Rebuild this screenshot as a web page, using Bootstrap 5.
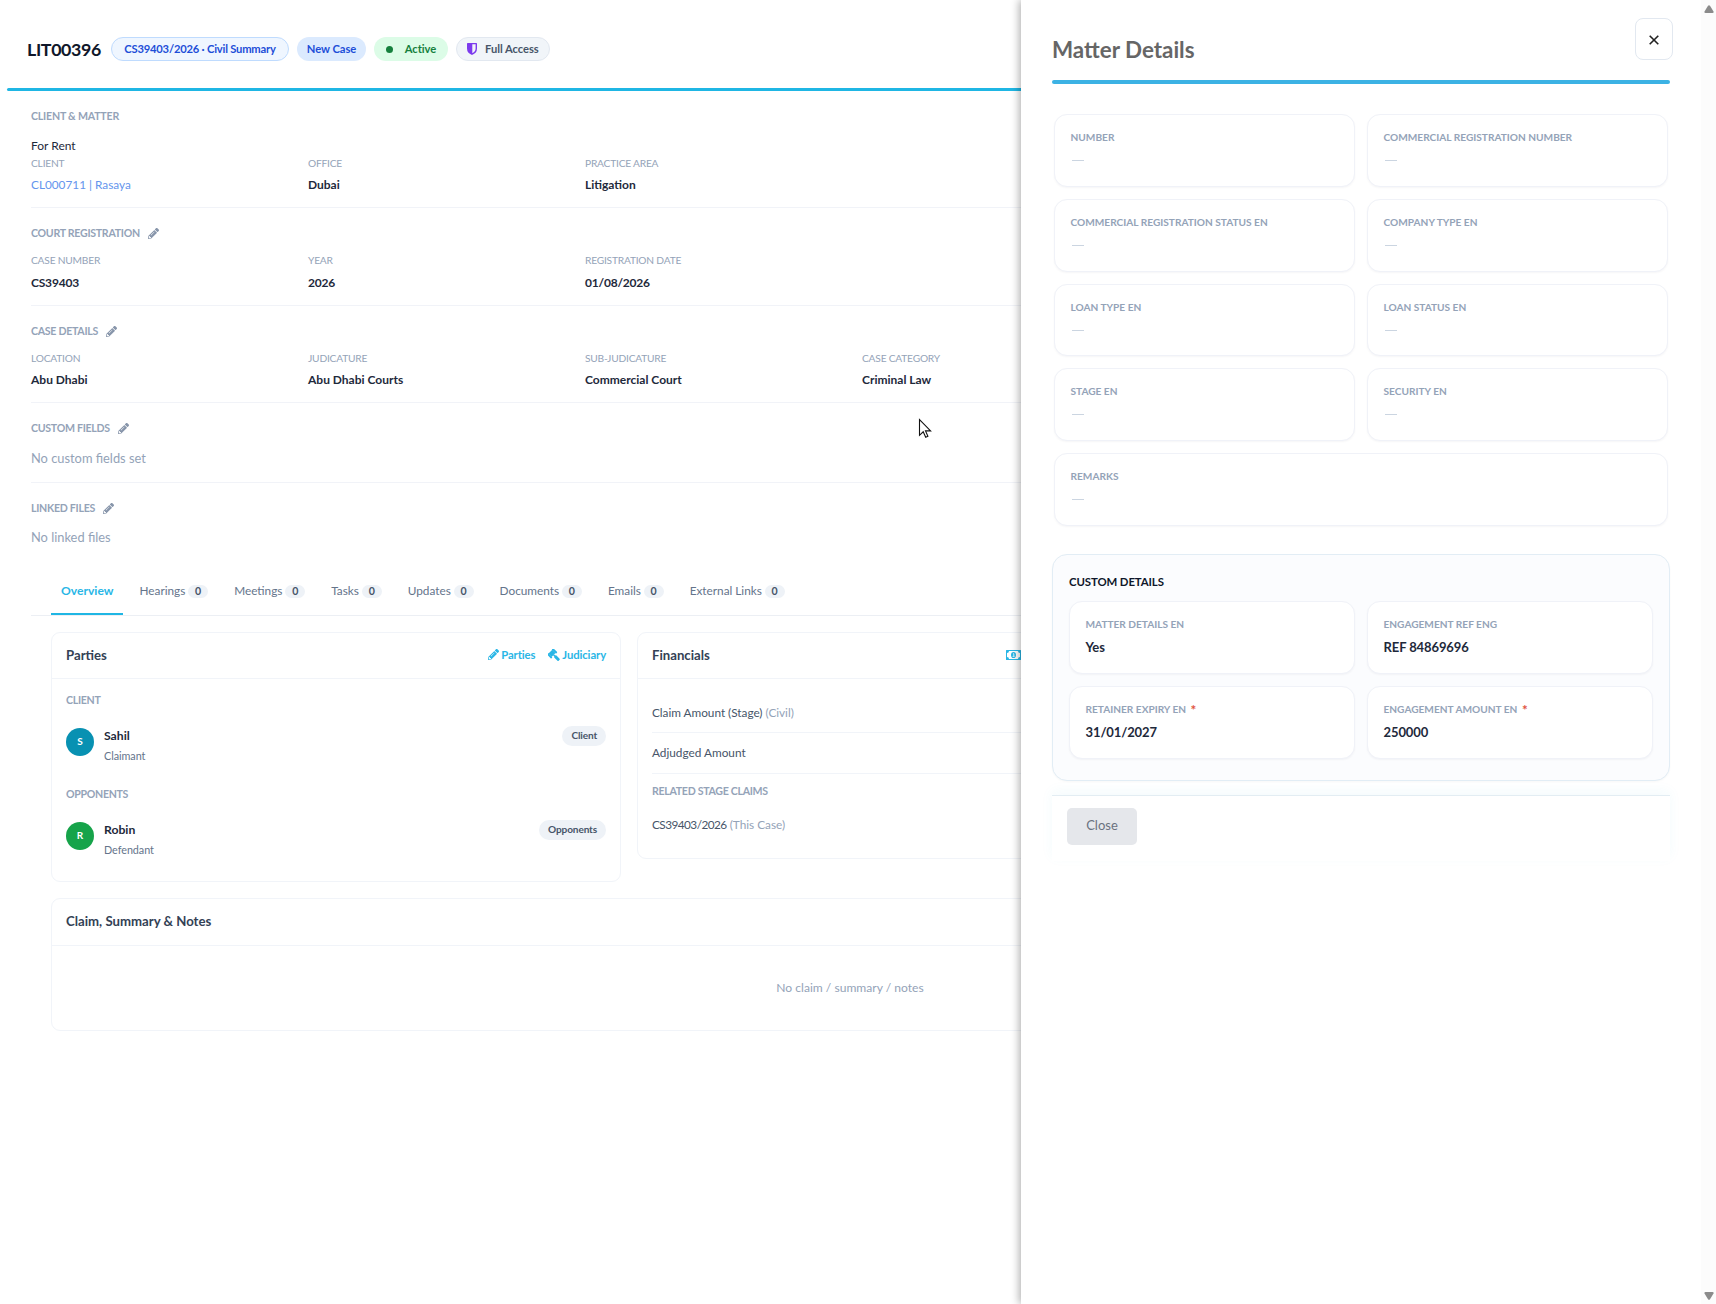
<!DOCTYPE html>
<html lang="en">
<head>
<meta charset="utf-8">
<title>LIT00396</title>
<link rel="stylesheet" href="https://cdn.jsdelivr.net/npm/bootstrap@5.3.0/dist/css/bootstrap.min.css">
<style>
html,body{height:1304px;overflow:hidden}
body{font-family:Lato,"Open Sans",sans-serif;background:#fff;color:#1e293b;font-size:11.8px;line-height:20px}
.shell{width:1716px;height:1304px}
.main-pane{width:1701px}
.case-head{height:88px;padding:10px 0 0 27px;gap:8px}
.case-no{font-size:17.8px;letter-spacing:-.35px;font-weight:700;color:#0f172a;width:76px;white-space:nowrap}
.chip{height:24px;border-radius:12px;padding:0 10px;font-weight:700;font-size:11.2px;letter-spacing:-.05px;border:1px solid transparent;white-space:nowrap}
.chip-ref{background:#eff6ff;border-color:#bfdbfe;color:#1d4ed8;width:178px;letter-spacing:-.2px}
.chip-new{background:#dbeafe;color:#1d4ed8;width:69px}
.chip-on{background:#dcfce7;color:#15803d;width:74px}
.chip-acc{background:#f1f5f9;border-color:#e2e8f0;color:#475569;width:94px}
.dot{width:7px;height:7px;border-radius:50%;background:#15803d;margin-right:12px}
.rule{height:3px;background:#1fb6e4;margin-left:7px;border-radius:2px}
.sect{margin-left:31px;padding-top:16px;border-bottom:1px solid #f1f3f8;padding-bottom:12px}
.sect-text{padding-bottom:14px}
.sect h6,.cap{font-size:10.6px;line-height:19px;font-weight:700;color:#94a3b8;margin:0 0 10px;letter-spacing:-.28px}
.sect .h-plain{letter-spacing:-.2px}
.cap{letter-spacing:-.3px;margin:0}
.sect h6{display:flex;align-items:center}
.sect h6 svg{margin:-1px 0 0 8px;color:#8795aa}
.matter-name{font-size:12px;line-height:19px;margin-bottom:1px}
.fld{width:277px}
.lbl{font-size:10.2px;line-height:15px;color:#94a3b8;margin-bottom:4px;letter-spacing:-.2px}
.lbl-5{margin-bottom:5px}
.val{font-size:12px;font-weight:700;color:#1e293b}
.num{letter-spacing:-.2px}
.lnk{color:#6495ed}
.none{font-size:12.85px;color:#94a3b8}
.none-up{line-height:19px;padding-bottom:1px}
.tabbar{margin:33px 0 0 31px;padding-left:20px;gap:6px;border-bottom:1px solid #eceff4}
.tab{padding:0 10px 12px;border-bottom:2px solid transparent;color:#64748b;display:flex;align-items:center;white-space:nowrap}
.tab.on{color:#29b6e6;border-color:#1fb6e4;font-weight:700;font-size:12.1px}
.cnt{height:13px;line-height:13px;width:20px;border-radius:7px;background:#eef2f7;color:#475569;font-size:10.6px;font-weight:700;text-align:center;margin-left:2.8px}
.panes{margin:16px 52px 0 51px;gap:16px}
.box{border:1px solid #f1f4f9;border-radius:9px}
.box-h{height:46px;padding:0 14px 2px;border-bottom:1px solid #f1f4f9}
.box-parties{width:570px;height:250px}
.box-fin{height:227px}
.box-notes{margin:16px 52px 0 51px;height:133px}
.box-notes .box-h{height:47px;padding-bottom:3px}
.ttl{font-size:13.2px;font-weight:700;color:#334155}
.act{color:#29b6e6;font-weight:700;font-size:11.3px;letter-spacing:-.1px}
.act svg{margin-right:2px}
.act .ico-gavel{margin-left:13px}
.people{padding:12px 14px 0}
.person{margin-top:16px;min-height:40px}
.cap-2{margin-top:19px}
.ava{width:28px;height:28px;border-radius:50%;color:#fff;font-weight:700;font-size:10px;line-height:26px;text-align:center;margin:2px 10px 0 0}
.ava-s{background:#0891b2}
.ava-r{background:#16a34a}
.who{font-size:12.2px;font-weight:700;color:#1e293b}
.as{font-size:10.8px;color:#64748b;letter-spacing:-.05px}
.role{background:#eef2f7;color:#475569;height:20px;line-height:19px;border-radius:10px;padding:0 9px;font-size:10.1px;letter-spacing:-.15px;font-weight:700}
.cash{margin-left:296px}
.fin-body{padding:24px 14px 0}
.fin{border-bottom:1px solid #f1f4f9;color:#475569}
.fin-1{height:30px;letter-spacing:-.02px}
.fin-1,.fin-2{white-space:pre}
.fin-2{height:41px;padding-top:10px}
.fin-cap{margin-top:8px}
.fin-3{margin-top:14px}
.digits{letter-spacing:-.55px}
.mut{color:#94a3b8}
.notes-none{font-size:12.1px;padding-top:32px}
.drawer{position:absolute;left:1021px;top:0;width:695px;height:1304px;background:#fff;box-shadow:-2px 0 8px rgba(0,0,0,.3);padding:0 46px 0 31px}
.x-btn{position:absolute;left:614px;top:18px;width:38px;height:42px;border:1px solid #e2e8f0;border-radius:8px;background:#fff;padding:2px 0 0;line-height:0}
.dw-t{font-size:22.4px;font-weight:700;color:#666;line-height:30px;padding-top:35px;height:80px;margin:0}
.dw-r{height:4px;background:#3cb2e4;border-radius:2px}
.fgrid{display:grid;grid-template-columns:1fr 1fr;gap:12px}
.g1{padding:30px 2px 0}
.fc{height:73px;border:1px solid #f0f2f8;border-radius:13px;padding:14px 15px 0 15.5px;background:#fff;box-shadow:0 1px 2px rgba(15,23,42,.04)}
.g1 .fc{height:72.75px}
.wide{grid-column:span 2}
.fl{font-size:10.15px;letter-spacing:0;font-weight:700;color:#94a3b8;line-height:16px;position:relative}
.fv{font-size:13px;font-weight:700;color:#1e293b;line-height:20px;margin-top:5px;letter-spacing:-.1px}
.dash{width:12px;height:1px;background:#cbd5e1;margin:15px 0 0 1px}
.cbox{margin-top:28px;height:227px;border:1px solid #e2edf5;border-radius:15px;background:#fbfcfe;padding:17px 16px 0;box-shadow:0 1px 2px rgba(15,23,42,.03)}
.cbt{font-size:11.4px;font-weight:700;color:#0f172a;line-height:20px;margin-bottom:9px;letter-spacing:-.1px}
.foot{margin-top:14px;height:66px;border-top:1px solid #e3edf3;padding:12px 15px;box-shadow:0 -4px 12px rgba(40,180,220,.05);background:#fff}
.c-btn{width:70px;height:37px;border:0;border-radius:5px;background:#e5e7eb;color:#6b7280;font-size:13px;padding:0 0 2px}
.sb{position:absolute;right:0;top:0;width:15px;height:1304px;background:#fcfcfc;padding:5px 3px 4px}
.cur{position:absolute;left:918px;top:418px}
.req{color:#e0533d;font-size:13.500px;line-height:10px;margin-left:2px;vertical-align:-2px}
</style>
<script src="https://cdn.jsdelivr.net/npm/bootstrap@5.3.0/dist/js/bootstrap.bundle.min.js"></script>
</head>
<body>
<svg width="0" height="0" class="position-absolute"><defs>
<symbol id="pen" viewBox="0 0 512 512"><path fill="currentColor" fill-rule="evenodd" d="M498 142l-46 46c-5 5-13 5-17 0L324 77c-5-5-5-12 0-17l46-46c19-19 49-19 68 0l60 60c19 19 19 49 0 68zM284 100L22 362 0 484c-3 16 12 30 28 28l122-22 262-262c5-5 5-13 0-17L301 100c-4-5-12-5-17 0zM88 424h48v36l-64 12-32-31 12-65h36zM140 345l-14-14 160-160 14 14z"/></symbol>
<symbol id="gavel" viewBox="0 0 12 12"><g fill="currentColor" transform="rotate(45 4.500 4.500)"><rect x="1.700" y="2" width="4.600" height="5.400"/><rect x=".9" y=".2" width="6.200" height="1.900" rx=".6"/><rect x=".9" y="7.200" width="6.200" height="1.900" rx=".6"/><rect x="6" y="3.900" width="2.600" height="1.400"/><rect x="8" y="3.200" width="6" height="2.900" rx=".8"/></g></symbol>
</defs></svg>
<div class="shell position-relative overflow-hidden">
<main class="main-pane">
 <header class="case-head d-flex align-items-center">
  <span class="case-no">LIT00396</span>
  <span class="chip chip-ref d-flex align-items-center justify-content-center">CS39403/2026 · Civil Summary</span>
  <span class="chip chip-new d-flex align-items-center justify-content-center">New Case</span>
  <span class="chip chip-on d-flex align-items-center justify-content-center"><i class="dot"></i>Active</span>
  <span class="chip chip-acc d-flex align-items-center"><svg class="me-2" width="10" height="12" viewBox="0 0 10 12"><path fill="#7c3aed" fill-rule="evenodd" d="M0 .6Q0 0 .8 0H9.2Q10 0 10 .6V5.500Q10 10 5 12 0 10 0 5.500ZM5.300 1.300V10.300Q8.600 8.500 8.600 5.500V1.300Z"/></svg>Full Access</span>
 </header>
 <div class="rule"></div>
 <section class="sect"><h6 class="h-plain">CLIENT &amp; MATTER</h6><div class="matter-name">For Rent</div>
  <div class="d-flex">
   <div class="fld"><div class="lbl">CLIENT</div><div class="lnk">CL000711 | Rasaya</div></div>
   <div class="fld"><div class="lbl">OFFICE</div><div class="val">Dubai</div></div>
   <div class="fld"><div class="lbl">PRACTICE AREA</div><div class="val">Litigation</div></div>
  </div></section>
 <section class="sect"><h6>COURT REGISTRATION<svg width="11" height="11"><use href="#pen"/></svg></h6>
  <div class="d-flex">
   <div class="fld"><div class="lbl lbl-5">CASE NUMBER</div><div class="val num">CS39403</div></div>
   <div class="fld"><div class="lbl lbl-5">YEAR</div><div class="val num">2026</div></div>
   <div class="fld"><div class="lbl lbl-5">REGISTRATION DATE</div><div class="val num">01/08/2026</div></div>
  </div></section>
 <section class="sect"><h6>CASE DETAILS<svg width="11" height="11"><use href="#pen"/></svg></h6>
  <div class="d-flex">
   <div class="fld"><div class="lbl">LOCATION</div><div class="val">Abu Dhabi</div></div>
   <div class="fld"><div class="lbl">JUDICATURE</div><div class="val">Abu Dhabi Courts</div></div>
   <div class="fld"><div class="lbl">SUB-JUDICATURE</div><div class="val">Commercial Court</div></div>
   <div class="fld"><div class="lbl">CASE CATEGORY</div><div class="val">Criminal Law</div></div>
  </div></section>
 <section class="sect sect-text"><h6>CUSTOM FIELDS<svg width="11" height="11"><use href="#pen"/></svg></h6><div class="none">No custom fields set</div></section>
 <section class="sect border-0 pb-0"><h6>LINKED FILES<svg width="11" height="11"><use href="#pen"/></svg></h6><div class="none none-up">No linked files</div></section>
 <nav class="tabbar d-flex">
  <div class="tab on">Overview</div>
  <div class="tab">Hearings<span class="cnt">0</span></div>
  <div class="tab">Meetings<span class="cnt">0</span></div>
  <div class="tab">Tasks<span class="cnt">0</span></div>
  <div class="tab">Updates<span class="cnt">0</span></div>
  <div class="tab">Documents<span class="cnt">0</span></div>
  <div class="tab">Emails<span class="cnt">0</span></div>
  <div class="tab">External Links<span class="cnt">0</span></div>
 </nav>
 <div class="panes d-flex align-items-start">
  <div class="box box-parties flex-shrink-0">
   <div class="box-h d-flex align-items-center justify-content-between"><span class="ttl">Parties</span>
    <span class="act d-flex align-items-center"><svg width="11" height="11"><use href="#pen"/></svg>Parties<svg class="ico-gavel" width="12" height="12"><use href="#gavel"/></svg>Judiciary</span></div>
   <div class="people">
    <div class="cap">CLIENT</div>
    <div class="d-flex person"><div class="ava ava-s">S</div><div class="flex-grow-1"><div class="who">Sahil</div><div class="as">Claimant</div></div><span class="role">Client</span></div>
    <div class="cap cap-2">OPPONENTS</div>
    <div class="d-flex person"><div class="ava ava-r">R</div><div class="flex-grow-1"><div class="who">Robin</div><div class="as">Defendant</div></div><span class="role">Opponents</span></div>
   </div>
  </div>
  <div class="box box-fin flex-grow-1">
   <div class="box-h d-flex align-items-center"><span class="ttl">Financials</span>
    <svg class="cash" width="15" height="10" viewBox="0 0 15 10"><path fill="#29b6e6" fill-rule="evenodd" d="M0 .5Q0 0 .5 0H14.500Q15 0 15 .5V9.500Q15 10 14.500 10H.5Q0 10 0 9.500ZM3 1Q3 2.800 1 3V7Q3 7.200 3 9H12Q12 7.200 14 7V3Q12 2.800 12 1Z"/><ellipse cx="7.500" cy="5" rx="2.500" ry="3.100" fill="#29b6e6"/><path d="M7 3.700h.8v2.500M6.600 6.400h2" stroke="#fff" stroke-width=".8" fill="none"/></svg></div>
   <div class="fin-body">
    <div class="fin fin-1">Claim Amount (Stage) <span class="mut">(Civil)</span></div>
    <div class="fin fin-2">Adjudged Amount</div>
    <div class="cap fin-cap">RELATED STAGE CLAIMS</div>
    <div class="fin border-0 fin-3"><span class="digits">CS39403/2026</span> <span class="mut">(This Case)</span></div>
   </div>
  </div>
 </div>
 <div class="box box-notes"><div class="box-h d-flex align-items-center"><span class="ttl">Claim, Summary &amp; Notes</span></div>
  <div class="notes-none text-center mut">No claim / summary / notes</div></div>
</main>
<svg class="cur" width="14" height="21" viewBox="0 0 14 21"><path d="M1.500 1.500V17.300L5.200 13.800 7.700 19.300 9.900 18.300 7.500 12.900H12.600Z" fill="#fff" stroke="#111" stroke-width="1.100"/></svg>
<aside class="drawer">
 <button class="x-btn" aria-label="Close panel"><svg width="10" height="10" viewBox="0 0 10 10"><path d="M.7.7 9.300 9.300M9.300.7.7 9.300" stroke="#222" stroke-width="1.600"/></svg></button>
 <h3 class="dw-t">Matter Details</h3><div class="dw-r"></div>
 <div class="fgrid g1">
  <div class="fc"><div class="fl">NUMBER</div><div class="dash"></div></div>
  <div class="fc"><div class="fl">COMMERCIAL REGISTRATION NUMBER</div><div class="dash"></div></div>
  <div class="fc"><div class="fl">COMMERCIAL REGISTRATION STATUS EN</div><div class="dash"></div></div>
  <div class="fc"><div class="fl">COMPANY TYPE EN</div><div class="dash"></div></div>
  <div class="fc"><div class="fl">LOAN TYPE EN</div><div class="dash"></div></div>
  <div class="fc"><div class="fl">LOAN STATUS EN</div><div class="dash"></div></div>
  <div class="fc"><div class="fl">STAGE EN</div><div class="dash"></div></div>
  <div class="fc"><div class="fl">SECURITY EN</div><div class="dash"></div></div>
  <div class="fc wide"><div class="fl">REMARKS</div><div class="dash"></div></div>
 </div>
 <div class="cbox"><div class="cbt">CUSTOM DETAILS</div>
  <div class="fgrid">
   <div class="fc"><div class="fl">MATTER DETAILS EN</div><div class="fv">Yes</div></div>
   <div class="fc"><div class="fl">ENGAGEMENT REF ENG</div><div class="fv">REF 84869696</div></div>
   <div class="fc"><div class="fl">RETAINER EXPIRY EN <span class="req">*</span></div><div class="fv">31/01/2027</div></div>
   <div class="fc"><div class="fl">ENGAGEMENT AMOUNT EN <span class="req">*</span></div><div class="fv">250000</div></div>
  </div></div>
 <div class="foot"><button class="c-btn">Close</button></div>
 <div class="sb d-flex flex-column justify-content-between">
  <svg width="10" height="8" viewBox="0 0 10 8"><path d="M4 .8Q5-.4 6 .8L9.500 6.400Q10 8 8.500 8H1.500Q0 8 .5 6.400Z" fill="#8b8b8b"/></svg>
  <svg width="10" height="8" viewBox="0 0 10 8"><path d="M4 7.200Q5 8.400 6 7.200L9.500 1.600Q10 0 8.500 0H1.500Q0 0 .5 1.600Z" fill="#8b8b8b"/></svg>
 </div>
</aside>
</div>
</body>
</html>
